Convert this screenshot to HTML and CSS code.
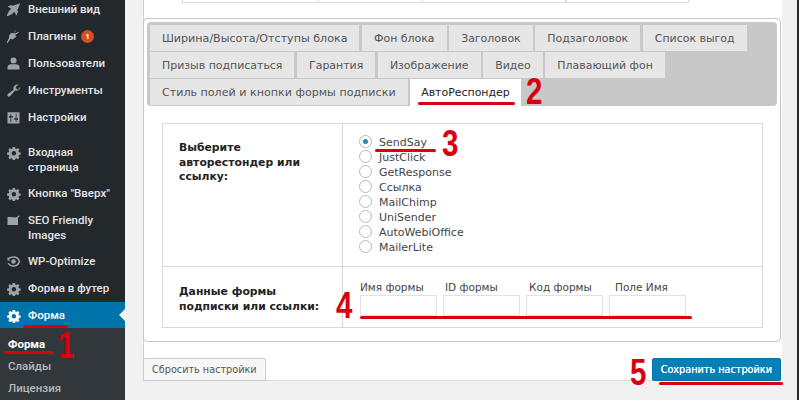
FILE: index.html
```html
<!DOCTYPE html>
<html lang="ru">
<head>
<meta charset="utf-8">
<title>Форма</title>
<link rel="stylesheet" href="styles.css">
</head>
<body>
<div class="screen">
  <aside class="sidebar">
    <ul class="menu">
      <li class="item"><svg class="ic" viewBox="0 0 20 20"><path d="M18 2 9 5 7 4 2 6l5 3-3 3-3 6 1 1 6-3 3-3 3 5 2-5-1-2 4-9z"/></svg><span>Внешний вид</span></li>
      <li class="item"><svg class="ic" viewBox="0 0 20 20"><path d="M12 2l-2 4-3-1-3 4 0 3-3 6 1 1 4-6 3 1 5-4-2-2 5-3-1-1-4 2-1-1 2-3z"/></svg><span>Плагины</span><b class="badge">1</b></li>
      <li class="item"><svg class="ic" viewBox="0 0 20 20"><circle cx="10" cy="6" r="4"/><path d="M2 18v-3c0-3 2-4 5-4h6c3 0 5 1 5 4v3z"/></svg><span>Пользователи</span></li>
      <li class="item"><svg class="ic" viewBox="0 0 20 20"><path d="M19 5c0 4-4 6-7 5l-7 8c-1 1-4 0-3-3l8-6c-1-4 2-8 7-7l-4 3 1 3 2 1z"/></svg><span>Инструменты</span></li>
      <li class="item"><svg class="ic" viewBox="0 0 20 20"><path fill-rule="evenodd" d="M2 3h16v15H2zM6 5v3H4v2h2v6h1v-6h2V8H7V5zm7 0v6h-2v2h2v3h1v-3h2v-2h-2V5z"/></svg><span>Настройки</span></li>
      <li class="item two first-group"><svg class="ic" viewBox="0 0 20 20"><use href="#gear"/></svg><span>Входная страница</span></li>
      <li class="item"><svg class="ic" viewBox="0 0 20 20"><use href="#gear"/></svg><span>Кнопка "Вверх"</span></li>
      <li class="item two"><svg class="ic" viewBox="0 0 20 20"><path d="M2 5l11 1 5-3v2l-2 1v10H2z"/></svg><span>SEO Friendly Images</span></li>
      <li class="item"><svg class="ic" viewBox="0 0 20 20"><path d="M10 3c5 0 8 3 9 7-1 4-4 7-9 7-4 0-7-2-8-5h2c1 2 3 3 6 3 3 0 6-2 7-5-1-3-4-5-7-5-3 0-5 1-6 3h3L2 9V4l1 1c2-1 4-2 7-2z"/><circle cx="10" cy="10" r="3"/></svg><span>WP-Optimize</span></li>
      <li class="item"><svg class="ic" viewBox="0 0 20 20"><use href="#gear"/></svg><span>Форма в футер</span></li>
      <li class="item current"><svg class="ic" viewBox="0 0 20 20"><use href="#gear"/></svg><span>Форма</span></li>
    </ul>
    <ul class="submenu">
      <li class="sub active">Форма</li>
      <li class="sub">Слайды</li>
      <li class="sub">Лицензия</li>
    </ul>
  </aside>

  <main class="content">
    <div class="top-strip">
      <div class="top-cell c1"></div>
      <div class="top-cell c2"></div>
      <div class="top-cell c3"></div>
      <div class="top-cell c4"></div>
    </div>
    <section class="card">
      <nav class="tabs">
        <div class="tab-row">
          <span class="tab long">Ширина/Высота/Отступы блока</span>
          <span class="tab">Фон блока</span>
          <span class="tab">Заголовок</span>
          <span class="tab">Подзаголовок</span>
          <span class="tab">Список выгод</span>
        </div>
        <div class="tab-row">
          <span class="tab">Призыв подписаться</span>
          <span class="tab">Гарантия</span>
          <span class="tab">Изображение</span>
          <span class="tab">Видео</span>
          <span class="tab">Плавающий фон</span>
        </div>
        <div class="tab-row">
          <span class="tab long">Стиль полей и кнопки формы подписки</span>
          <span class="tab selected">АвтоРеспондер</span>
        </div>
      </nav>
      <div class="settings">
        <div class="row row-radio">
          <div class="label">Выберите авторестондер или ссылку:</div>
          <div class="value radios">
            <label class="radio on"><i></i>SendSay</label>
            <label class="radio"><i></i>JustClick</label>
            <label class="radio"><i></i>GetResponse</label>
            <label class="radio"><i></i>Ссылка</label>
            <label class="radio"><i></i>MailChimp</label>
            <label class="radio"><i></i>UniSender</label>
            <label class="radio"><i></i>AutoWebiOffice</label>
            <label class="radio"><i></i>MailerLite</label>
          </div>
        </div>
        <div class="row row-fields">
          <div class="label">Данные формы подписки или ссылки:</div>
          <div class="value fields">
            <div class="field"><span>Имя формы</span><div class="input"></div></div>
            <div class="field"><span>ID формы</span><div class="input"></div></div>
            <div class="field"><span>Код формы</span><div class="input"></div></div>
            <div class="field"><span>Поле Имя</span><div class="input"></div></div>
          </div>
        </div>
      </div>
    </section>
    <footer class="actions">
      <span class="btn">Сбросить настройки</span>
      <span class="btn primary">Сохранить настройки</span>
    </footer>
  </main>
  <div class="edge"></div>

  <span class="mark m1"></span><span class="mark m2"></span><span class="mark m3"></span><span class="mark m4"></span><span class="mark m5"></span><span class="mark m6"></span>
  <span class="num n1">1</span><span class="num n2">2</span><span class="num n3">3</span><span class="num n4">4</span><span class="num n5">5</span>
</div>
<svg class="defs" width="0" height="0"><defs><path id="gear" fill-rule="evenodd" d="M8.5 2h3l.4 2.3 1.5.6 1.9-1.3 2.1 2.1-1.3 1.9.6 1.5 2.3.4v3l-2.3.4-.6 1.5 1.3 1.9-2.1 2.1-1.9-1.3-1.5.6-.4 2.3h-3l-.4-2.3-1.5-.6-1.9 1.3-2.1-2.1 1.3-1.9-.6-1.5-2.3-.4v-3l2.3-.4.6-1.5-1.3-1.9 2.1-2.1 1.9 1.3 1.5-.6zM10 7.5a3 3 0 1 0 0 6 3 3 0 0 0 0-6z" transform="translate(.5 .5)"/></defs></svg>
</body>
</html>
```
FILE: styles.css
```css
* { box-sizing: border-box; }
html, body { margin: 0; padding: 0; }
body { width: 799px; height: 400px; overflow: hidden; background: #f1f1f1; font-family: "DejaVu Sans", sans-serif; }
.screen { position: relative; display: flex; width: 799px; height: 400px; overflow: hidden; }
.defs { position: absolute; }

.sidebar { width: 125px; flex: none; background: #23282d; color: #e4e5e6; font: 500 11.5px/15px Roboto, sans-serif; }
.menu, .submenu { list-style: none; margin: 0; padding: 0; }
.menu { margin-top: -4px; }
.item { display: flex; align-items: center; gap: 7px; height: 27px; padding-left: 6px; }
.item .ic { width: 15px; height: 15px; flex: none; fill: #9ea3a8; }
.item.two { height: 41px; align-items: flex-start; padding-top: 6px; }
.first-group { margin-top: 8px; }
.current { background: #0073aa; color: #fff; position: relative; height: 26px; }
.current .ic { fill: #fff; }
.current::after { content: ""; position: absolute; right: 0; top: 7px; border: 6px solid transparent; border-right-color: #f1f1f1; border-left: 0; }
.badge { width: 13px; height: 13px; margin-left: -2px; border-radius: 50%; background: #d54e21; color: #fff; font-size: 8px; line-height: 13px; text-align: center; }
.submenu { background: #32373c; height: 72px; padding-top: 5px; color: #b4b9be; }
.sub { padding-left: 8px; height: 22px; line-height: 22px; }
.sub.active { color: #fff; font-weight: 700; }

.content { width: 639px; flex: none; margin-left: 18px; height: 381px; background: #fff; border-left: 1px solid #d0d0d0; border-bottom: 1px solid #dadada; }
.top-strip { display: flex; margin-left: 38px; height: 3px; border-bottom: 1px solid #dcdcdc; width: 507px; }
.top-cell { border-right: 1px solid #dcdcdc; }
.c1 { width: 137px; border-left: 1px solid #dcdcdc; }
.c2 { width: 104px; }
.c3 { width: 143px; }
.c4 { width: 123px; border-left: 1px solid #dcdcdc; }
.card { margin: 15px 0 0 -1px; width: 638px; height: 324px; border: 1px solid #c6c6c6; border-radius: 4px; padding: 3px; background: #fff; }
.tabs { width: 630px; height: 84px; background: #c8c8c8; border-radius: 4px; padding: 3px 0 0 3px; }
.tab-row { display: flex; gap: 2.6px; height: 27px; }
.tab { height: 26px; padding: 0 12px; background: #e6e6e6; color: #555; font: 10.95px/28px "DejaVu Sans", Verdana, sans-serif; white-space: nowrap; }
.tab.long { font-size: 11.1px; }
.tab.selected { background: #fff; color: #222; height: 27px; padding: 0 11px; }
.settings { margin: 17px 0 0 15px; width: 601px; border: 1px solid #d8d8d8; }
.row { display: flex; }
.row-radio { height: 143px; border-bottom: 1px solid #d8d8d8; }
.row-fields { height: 60px; }
.label { width: 180px; flex: none; border-right: 1px solid #d8d8d8; padding: 17px 14px 0 16px; font: 700 10.8px/14.5px "DejaVu Sans", Verdana, sans-serif; color: #222; }
.row-fields .label { padding-top: 18px; }
.value { flex: 1; }
.radios { display: flex; flex-direction: column; padding: 11px 0 0 16px; }
.radio { display: flex; align-items: center; gap: 7px; height: 15px; font: 11px/15px "DejaVu Sans", Verdana, sans-serif; color: #444; }
.radio i { width: 13px; height: 13px; margin-top: -2px; border-radius: 50%; border: 1px solid #b4b9be; background: #fff; flex: none; position: relative; }
.radio.on i::after { content: ""; position: absolute; left: 3px; top: 3px; width: 5px; height: 5px; border-radius: 50%; background: #1e8cbe; }
.fields { display: flex; gap: 6px; padding: 13px 0 0 17px; }
.field { width: 77px; display: flex; flex-direction: column; gap: 1px; font: 10.5px/14px "DejaVu Sans", Verdana, sans-serif; color: #444; white-space: nowrap; }
.field:nth-child(2) span { margin-left: 2px; }
.field:nth-child(3) span { margin-left: 3px; }
.field:nth-child(4) span { margin-left: 6px; }
.input { height: 21px; border: 1px solid #e2e2e2; background: #fff; }
.actions { display: flex; justify-content: space-between; align-items: flex-start; width: 638px; margin: 16px 0 0 -1px; }
.btn { height: 23px; padding: 0 8px; border: 1px solid #ccc; border-radius: 2px; background: #f7f7f7; color: #555; font: 9.7px/21px "DejaVu Sans", Verdana, sans-serif; white-space: nowrap; }
.btn.primary { background: #0a7fb5; border-color: #0073aa; color: #fff; text-shadow: 0 0 .5px #fff; }
.edge { flex: 1; background: #f1f1f1; border-right: 2px solid #2a2a2a; }

.mark { position: absolute; height: 3px; background: #d8000f; border-radius: 2px; }
.m1 { left: 23px; top: 325px; width: 45px; }
.m2 { left: 4px; top: 351px; width: 50px; }
.m3 { left: 418px; top: 102px; width: 97px; }
.m4 { left: 375px; top: 149px; width: 61px; }
.m5 { left: 360px; top: 316px; width: 332px; }
.m6 { left: 659px; top: 382px; width: 124px; }
.num { position: absolute; color: #d8000f; font: 700 36px/36px "Liberation Sans", Arial, sans-serif; transform: scaleX(.82); transform-origin: left top; }
.n1 { left: 58px; top: 328px; }
.n2 { left: 526px; top: 74px; }
.n3 { left: 442px; top: 126px; }
.n4 { left: 336px; top: 288px; }
.n5 { left: 630px; top: 355px; }
```
